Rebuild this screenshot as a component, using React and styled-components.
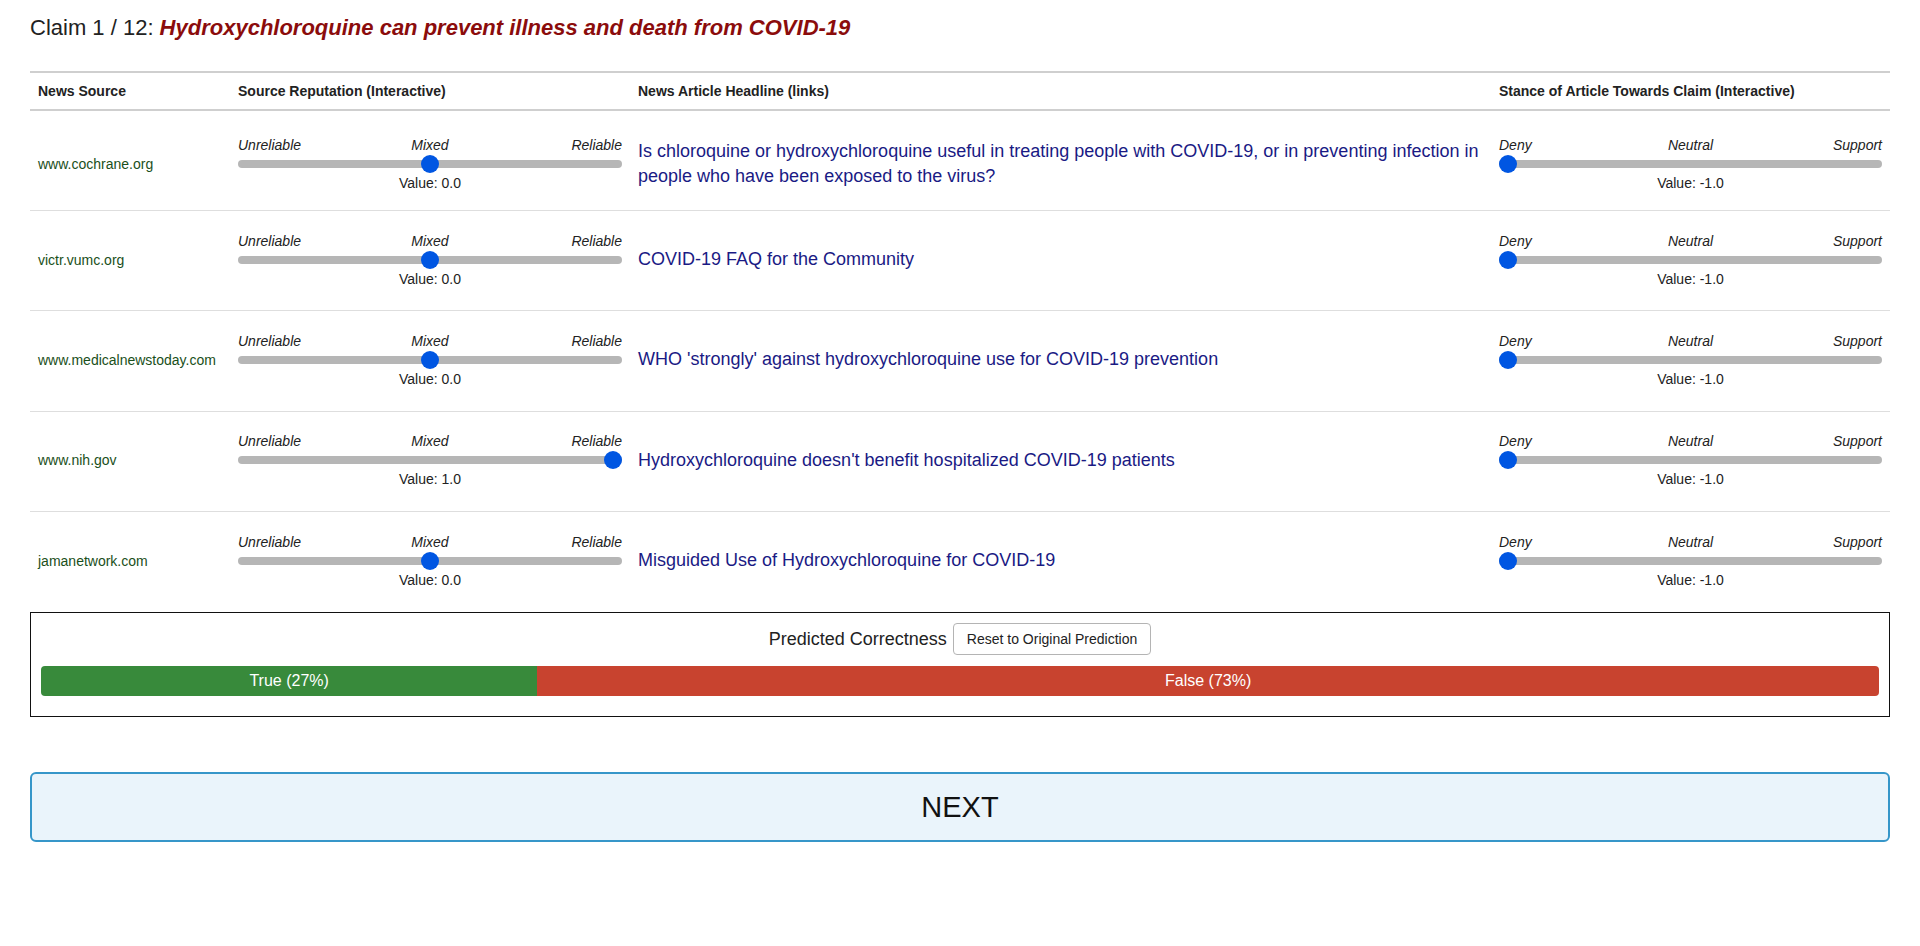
import React, { useState } from 'react';
import styled, { createGlobalStyle } from 'styled-components';

const GlobalStyle = createGlobalStyle`
  html, body {
    margin: 0;
    padding: 0;
    background: #fff;
    font-family: "Liberation Sans", Arial, sans-serif;
    color: #222;
  }
`;

const Page = styled.div`
  padding: 0 30px;
`;

const Title = styled.h1`
  margin: 15px 0 30px;
  font-size: 22px;
  line-height: 26px;
  font-weight: normal;
  color: #222;
`;

const ClaimText = styled.span`
  font-weight: bold;
  font-style: italic;
  color: #8b0c0c;
`;

const Table = styled.div`
  border-top: 2px solid #cfcfcf;
`;

const Grid = styled.div`
  display: grid;
  grid-template-columns: 200px 400px 1fr 399px;
  align-items: center;
`;

const HeaderRow = styled(Grid)`
  height: 36px;
  border-bottom: 2px solid #cfcfcf;
`;

const HeaderCell = styled.div`
  padding: 0 8px;
  font-size: 14px;
  font-weight: bold;
  color: #222;
`;

const Row = styled(Grid)`
  box-sizing: border-box;
  height: ${p => (p.first ? '100px' : '100.25px')};
  padding: ${p => (p.first ? '7px 0 0' : '0 0 2px')};
  border-bottom: ${p => (p.last ? 'none' : '1px solid #dedede')};
`;

const Cell = styled.div`
  padding: 0 8px;
`;

const Source = styled(Cell)`
  font-size: 14px;
  color: #1a4f1a;
`;

const Headline = styled.a`
  display: block;
  padding: 0 8px;
  font-size: 18px;
  line-height: 25px;
  color: #1a1a84;
  text-decoration: none;
`;

const SliderBox = styled.div`
  display: flex;
  flex-direction: column;
`;

const Labels = styled.div`
  display: grid;
  grid-template-columns: 1fr auto 1fr;
  font-size: 14px;
  line-height: 16px;
  font-style: italic;
  color: #222;
`;

const Label = styled.span`
  text-align: ${p => p.align};
`;

const Range = styled.input`
  -webkit-appearance: none;
  appearance: none;
  width: 100%;
  height: 18px;
  margin: 2px 0;
  background: transparent;
  cursor: pointer;

  &::-webkit-slider-runnable-track {
    height: 8px;
    border-radius: 4px;
    background: #b6b6b6;
  }
  &::-webkit-slider-thumb {
    -webkit-appearance: none;
    width: 18px;
    height: 18px;
    margin-top: -5px;
    border-radius: 50%;
    background: #0056e2;
    border: none;
  }
  &:focus {
    outline: none;
  }
`;

const Value = styled.div`
  text-align: center;
  font-size: 14px;
  line-height: 16px;
  color: #222;
`;

const PredictionBox = styled.div`
  border: 1px solid #111;
  padding: 10px 10px 20px;
`;

const PredictionHead = styled.div`
  display: flex;
  justify-content: center;
  align-items: center;
  gap: 6px;
  font-size: 18px;
  color: #222;
`;

const ResetButton = styled.button`
  height: 32px;
  padding: 0 13px;
  font-family: "Liberation Sans", Arial, sans-serif;
  font-size: 14px;
  color: #222;
  background: #fff;
  border: 1px solid #b4b4b4;
  border-radius: 4px;
  cursor: pointer;
`;

const Bar = styled.div`
  display: flex;
  height: 30px;
  margin-top: 11px;
  border-radius: 4px;
  overflow: hidden;
`;

const BarPart = styled.div`
  display: flex;
  align-items: center;
  justify-content: center;
  font-size: 16px;
  color: #fff;
  background: ${p => p.color};
`;

const NextButton = styled.button`
  display: block;
  width: 100%;
  height: 70px;
  margin-top: 55px;
  font-family: "Liberation Sans", Arial, sans-serif;
  font-size: 29px;
  color: #111;
  background: #eaf4fb;
  border: 2px solid #3696c9;
  border-radius: 6px;
  cursor: pointer;
`;

const rows = [
  {
    source: 'www.cochrane.org',
    rep: 0,
    stance: -1,
    headline:
      'Is chloroquine or hydroxychloroquine useful in treating people with COVID-19, or in preventing infection in people who have been exposed to the virus?'
  },
  { source: 'victr.vumc.org', rep: 0, stance: -1, headline: 'COVID-19 FAQ for the Community' },
  {
    source: 'www.medicalnewstoday.com',
    rep: 0,
    stance: -1,
    headline: "WHO 'strongly' against hydroxychloroquine use for COVID-19 prevention"
  },
  {
    source: 'www.nih.gov',
    rep: 1,
    stance: -1,
    headline: "Hydroxychloroquine doesn't benefit hospitalized COVID-19 patients"
  },
  { source: 'jamanetwork.com', rep: 0, stance: -1, headline: 'Misguided Use of Hydroxychloroquine for COVID-19' }
];

const aligns = ['left', 'center', 'right'];

function Slider({ labels, value, onChange }) {
  return (
    <SliderBox>
      <Labels>
        {labels.map((l, i) => (
          <Label key={l} align={aligns[i]}>
            {l}
          </Label>
        ))}
      </Labels>
      <Range type="range" min={-1} max={1} step={0.1} value={value} onChange={e => onChange(parseFloat(e.target.value))} />
      <Value>Value: {value.toFixed(1)}</Value>
    </SliderBox>
  );
}

export default function App() {
  const [data, setData] = useState(rows);
  const trueShare = 27;

  const update = (idx, key, val) => {
    setData(d => d.map((r, i) => (i === idx ? { ...r, [key]: val } : r)));
  };

  return (
    <Page>
      <GlobalStyle />
      <Title>
        Claim 1 / 12: <ClaimText>Hydroxychloroquine can prevent illness and death from COVID-19</ClaimText>
      </Title>
      <Table>
        <HeaderRow>
          <HeaderCell>News Source</HeaderCell>
          <HeaderCell>Source Reputation (Interactive)</HeaderCell>
          <HeaderCell>News Article Headline (links)</HeaderCell>
          <HeaderCell>Stance of Article Towards Claim (Interactive)</HeaderCell>
        </HeaderRow>
        {data.map((r, idx) => (
          <Row key={r.source} first={idx === 0} last={idx === data.length - 1}>
            <Source>{r.source}</Source>
            <Cell>
              <Slider labels={['Unreliable', 'Mixed', 'Reliable']} value={r.rep} onChange={v => update(idx, 'rep', v)} />
            </Cell>
            <Headline href="#">{r.headline}</Headline>
            <Cell>
              <Slider labels={['Deny', 'Neutral', 'Support']} value={r.stance} onChange={v => update(idx, 'stance', v)} />
            </Cell>
          </Row>
        ))}
      </Table>
      <PredictionBox>
        <PredictionHead>
          Predicted Correctness
          <ResetButton onClick={() => setData(rows)}>Reset to Original Prediction</ResetButton>
        </PredictionHead>
        <Bar>
          <BarPart color="#388a3b" style={{ width: `${trueShare}%` }}>
            True ({trueShare}%)
          </BarPart>
          <BarPart color="#c8432f" style={{ width: `${100 - trueShare}%` }}>
            False ({100 - trueShare}%)
          </BarPart>
        </Bar>
      </PredictionBox>
      <NextButton>NEXT</NextButton>
    </Page>
  );
}
